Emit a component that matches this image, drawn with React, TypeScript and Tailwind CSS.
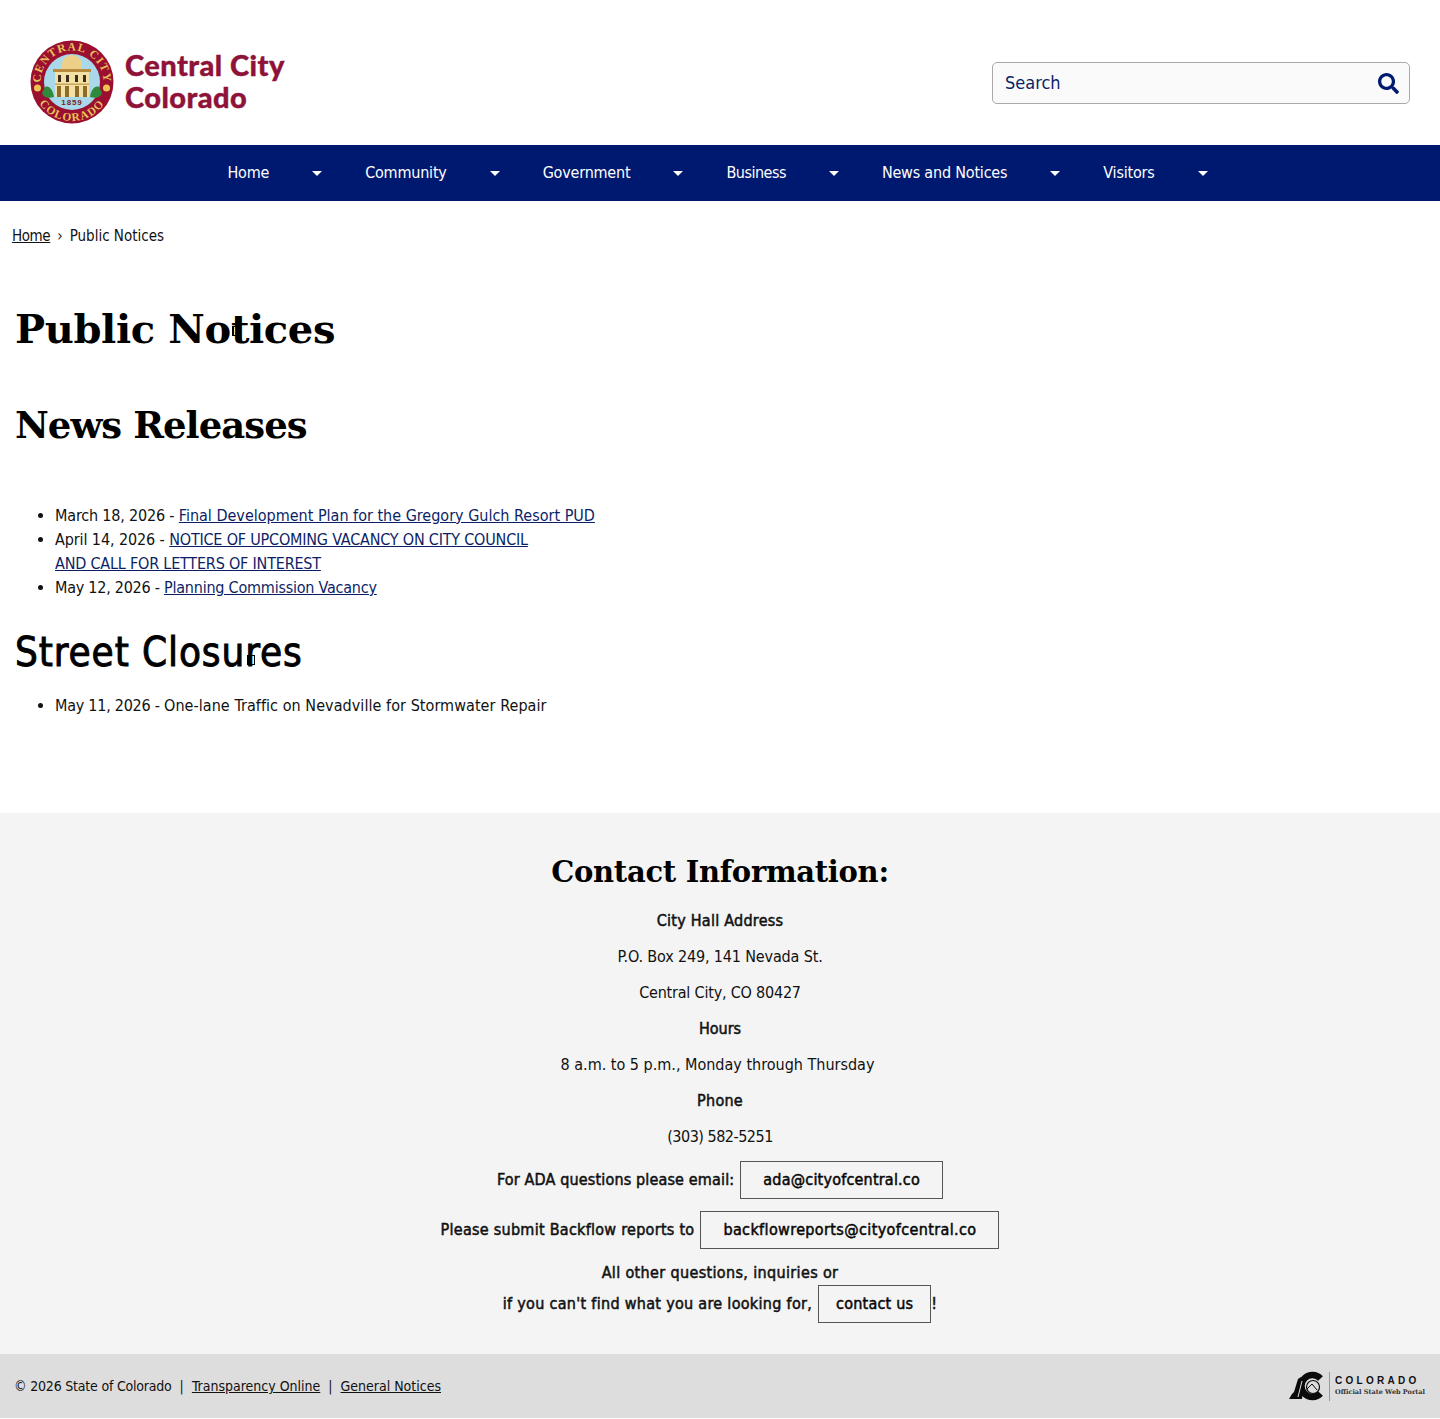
import { FaSearch } from "react-icons/fa";

const navItems = ["Home", "Community", "Government", "Business", "News and Notices", "Visitors"];

function Seal() {
  return (
    <svg width="84" height="84" viewBox="0 0 84 84" className="shrink-0">
      <defs>
        <path id="sealTop" d="M 12.9 54 A 31.5 31.5 0 1 1 71.1 54" />
        <path id="sealBottom" d="M 3 42 A 39 39 0 0 0 81 42" />
      </defs>
      <circle cx="42" cy="42" r="41.5" fill="#9b1030" />
      <circle cx="42" cy="42" r="28" fill="#a9d8ea" />
      <text fontFamily="'Liberation Serif', serif" fontWeight="700" fontSize="11.5" letterSpacing="1.1" fill="#e9c25a">
        <textPath href="#sealTop" startOffset="50%" textAnchor="middle">CENTRAL CITY</textPath>
      </text>
      <text fontFamily="'Liberation Serif', serif" fontWeight="700" fontSize="11.5" letterSpacing="1.2" fill="#e9c25a">
        <textPath href="#sealBottom" startOffset="50%" textAnchor="middle">COLORADO</textPath>
      </text>
      <path d="M32 30 V24 C32 19 37 15 42 15 C47 15 52 19 52 24 V30 Z" fill="#ecd08a" />
      <rect x="23" y="29" width="38" height="3" fill="#b88a3e" />
      <rect x="25" y="32" width="34" height="25" fill="#f3e0a4" />
      <g fill="#3b2c1c">
        <rect x="28" y="35" width="3" height="7" />
        <rect x="36" y="35" width="3" height="7" />
        <rect x="45" y="35" width="3" height="7" />
        <rect x="53" y="35" width="3" height="7" />
      </g>
      <g fill="#8f6b2a">
        <rect x="27" y="46" width="4" height="11" />
        <rect x="35" y="46" width="4" height="11" />
        <rect x="45" y="46" width="4" height="11" />
        <rect x="53" y="46" width="4" height="11" />
      </g>
      <rect x="25" y="43.5" width="34" height="1.5" fill="#c8a55a" />
      <path d="M15 47 C19 45 23 50 24 57 C18 59 13 57 12 53 C13 51 14 49 15 47 Z M69 47 C65 45 61 50 60 57 C66 59 71 57 72 53 C71 51 70 49 69 47 Z" fill="#2f8a3c" />
      <circle cx="7.5" cy="48" r="3.5" fill="#ecc34e" />
      <circle cx="76.5" cy="48" r="3.5" fill="#ecc34e" />
      <text x="42" y="64.5" textAnchor="middle" fontFamily="'Liberation Sans', sans-serif" fontWeight="700" fontSize="8" letterSpacing="0.9" fill="#7a1f1a">1859</text>
    </svg>
  );
}

function ColoradoLogo() {
  return (
    <div className="flex items-center gap-[4px]">
      <svg width="36" height="30" viewBox="2 0 36 30">
        <path d="M2 28 L5 23 L7 21 L11 8 L14 6 L17 10 L15 28 Z" fill="#0b0b0b" />
        <path d="M33.5 7.5 A 11 11 0 1 0 33.5 22.5" fill="none" stroke="#0b0b0b" strokeWidth="6.5" />
        <circle cx="26" cy="16" r="6.5" fill="none" stroke="#0b0b0b" strokeWidth="1.2" />
        <path d="M20 18 L25 13 L30 19" fill="none" stroke="#0b0b0b" strokeWidth="1" />
        <path d="M11 26 L15 10" stroke="#ddd" strokeWidth="1" fill="none" />
      </svg>
      <div className="w-px h-[29px] bg-[#999]" />
      <div className="flex flex-col gap-[1px] ml-[1px]">
        <span className="font-['Liberation_Sans',sans-serif] font-bold text-[10px] leading-[12px] tracking-[3.3px] text-[#111]">COLORADO</span>
        <span className="font-['DejaVu_Serif',serif] font-bold text-[6.5px] leading-[9px] text-[#333] whitespace-nowrap">Official State Web Portal</span>
      </div>
    </div>
  );
}

function Caret() {
  return <span className="absolute w-2 h-[10px] border border-black border-l-2" aria-hidden="true" />;
}

export default function App() {
  return (
    <div className="min-h-[1419px] bg-white text-[16px] leading-6 text-[#111] font-['DejaVu_Sans_Condensed','DejaVu_Sans',sans-serif]">
      <header className="h-[145px] flex items-start justify-between pl-[30px] pr-[30px]">
        <div className="flex items-center gap-[11px] pt-[40px]">
          <Seal />
          <div className="font-['Lato',sans-serif] font-black text-[29px] leading-[32px] tracking-[0.45px] text-[#8f1238] [-webkit-text-stroke:0.4px_#8f1238] -mt-[2px]">
            <div>Central City</div>
            <div>Colorado</div>
          </div>
        </div>
        <div className="mt-[62px] w-[418px] h-[42px] rounded-[5px] border border-[#aaa] bg-[#fafafa] flex items-center justify-between pl-3 pr-[10px]">
          <span className="text-[18px] text-[#0c1f66]">Search</span>
          <FaSearch size={21} className="text-[#001a70]" />
        </div>
      </header>

      <nav className="h-14 bg-[#001970] flex items-center justify-center pl-[38px] text-white tracking-[-0.2px]">
        {navItems.map((item) => (
          <div key={item} className="flex items-center">
            <span className={item === "Business" ? "tracking-[-0.5px]" : ""}>{item}</span>
            <span className="mx-[43px] w-0 h-0 border-x-[5px] border-x-transparent border-t-[5px] border-t-white" />
          </div>
        ))}
      </nav>

      <div className="flex gap-[7px] pl-3 pt-[23px] text-[15px] leading-6">
        <a className="underline tracking-[-0.4px]">Home</a>
        <span>›</span>
        <span>Public Notices</span>
      </div>

      <main className="pl-[15px]">
        <h1 className="relative mt-[53px] font-['DejaVu_Serif',serif] font-bold text-[40px] leading-[56px] tracking-[-0.35px] text-black">
          Public Notices
          <span className="absolute left-[217px] top-[25px] flex"><Caret /></span>
        </h1>
        <h2 className="mt-[40px] font-['DejaVu_Serif',serif] font-bold text-[37px] leading-[56px] tracking-[-0.95px] text-black">News Releases</h2>
        <ul className="mt-[51px] ml-[40px] list-disc">
          <li><span className="tracking-[-0.18px]">March 18, 2026 - </span><a className="underline text-[#0c1f66]">Final Development Plan for the Gregory Gulch Resort PUD</a></li>
          <li><span className="tracking-[-0.1px]">April 14, 2026 - </span><a className="underline text-[#0c1f66] tracking-[-0.2px]">NOTICE OF UPCOMING VACANCY ON CITY COUNCIL<br />AND CALL FOR LETTERS OF INTEREST</a></li>
          <li><span className="tracking-[-0.25px]">May 12, 2026 - </span><a className="underline text-[#0c1f66] tracking-[-0.22px]">Planning Commission Vacancy</a></li>
        </ul>
        <h2 className="relative mt-[28px] text-[40px] leading-[48px] tracking-[0.9px] text-black [-webkit-text-stroke:0.9px_#000]">
          Street Closures
          <span className="absolute left-[232px] top-[27px] flex [-webkit-text-stroke:0]"><Caret /></span>
        </h2>
        <ul className="mt-[18px] ml-[40px] list-disc">
          <li><span className="tracking-[-0.25px]">May 11, 2026 - </span><span className="tracking-[0.06px]">One-lane Traffic on Nevadville for Stormwater Repair</span></li>
        </ul>
      </main>

      <section className="mt-[95px] h-[541px] bg-[#f4f4f4] flex flex-col items-center text-center pt-[37px]">
        <h2 className="font-['DejaVu_Serif',serif] font-bold text-[29px] leading-[44px] tracking-[-0.3px] text-black">Contact Information:</h2>
        <p className="mt-[15px] tracking-[0.25px] [-webkit-text-stroke:0.5px_#111]">City Hall Address</p>
        <p className="mt-3 tracking-[-0.15px]">P.O. Box 249, 141 Nevada St.</p>
        <p className="mt-3 tracking-[-0.2px]">Central City, CO 80427</p>
        <p className="mt-3 [-webkit-text-stroke:0.5px_#111]">Hours</p>
        <p className="mt-3 pr-[5px]">8 a.m. to 5 p.m., Monday through Thursday</p>
        <p className="mt-3 tracking-[0.25px] [-webkit-text-stroke:0.5px_#111]">Phone</p>
        <p className="mt-3 tracking-[-0.5px]">(303) 582-5251</p>
        <p className="mt-3 tracking-[0.15px] [-webkit-text-stroke:0.5px_#111] flex items-center gap-[6px]">
          For ADA questions please email:
          <a className="inline-block border border-[#555] px-[22px] h-[38px] leading-[36px] tracking-[0.2px] text-black">ada@cityofcentral.co</a>
        </p>
        <p className="mt-3 tracking-[0.27px] [-webkit-text-stroke:0.5px_#111] flex items-center gap-[6px]">
          Please submit Backflow reports to
          <a className="inline-block border border-[#555] px-[22px] h-[38px] leading-[36px] tracking-[0.37px] text-black">backflowreports@cityofcentral.co</a>
        </p>
        <p className="mt-3 tracking-[0.35px] [-webkit-text-stroke:0.5px_#111]">All other questions, inquiries or</p>
        <p className="tracking-[0.3px] [-webkit-text-stroke:0.5px_#111] flex items-center gap-[6px]">
          if you can't find what you are looking for,
          <span className="flex items-center">
            <a className="inline-block border border-[#555] px-[17px] h-[38px] leading-[36px] tracking-[0.2px] text-black">contact us</a>!
          </span>
        </p>
      </section>

      <footer className="h-[64px] bg-[#dddddd] flex items-center justify-between pl-[14px] pr-[15px] text-[14px]">
        <div>
          <span className="tracking-[-0.2px]">© 2026 State of Colorado</span>&nbsp; |&nbsp; <a className="underline">Transparency Online</a>&nbsp; |&nbsp; <a className="underline">General Notices</a>
        </div>
        <ColoradoLogo />
      </footer>
    </div>
  );
}
